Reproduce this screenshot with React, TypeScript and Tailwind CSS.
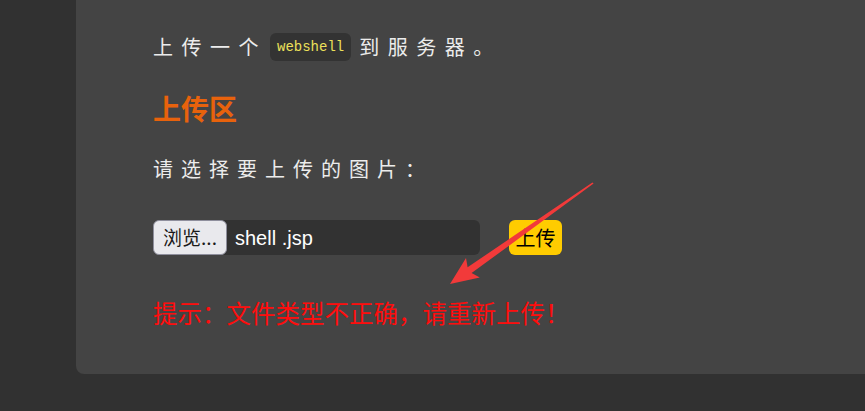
import React from "react";

const cjk = "font-['Noto_Sans_CJK_SC',sans-serif]";

const UploadCard: React.FC = () => {
  return (
    <div className="h-[374px] flex-1 rounded-bl-lg bg-[#444444] pl-[77px] pt-[31px]">
      <p className={`${cjk} flex h-8 items-center text-[20px] tracking-[8.5px] text-[#ececec]`}>
        上传一个
        <code className="ml-[3px] mr-2 rounded-md bg-[#333333] px-[7px] py-[4px] font-['Liberation_Mono',monospace] text-[14px] leading-5 tracking-normal text-[#ece05a]">
          webshell
        </code>
        到服务器。
      </p>

      <h2 className={`${cjk} mt-[27px] text-[28px] leading-9 font-bold text-[#e8620c]`}>上传区</h2>

      <p className={`${cjk} mt-[29px] text-[20px] leading-7 tracking-[8px] text-[#ececec]`}>请选择要上传的图片：</p>

      <div className="mt-9 flex h-[37px] items-center">
        <div className="flex h-[35px] w-[327px] items-center rounded-md bg-[#323232]">
          <button className={`${cjk} h-[35px] w-[74px] rounded-md border border-[#8f8f9d] bg-[#e9e9ed] text-[19px] text-[#1a1a1a]`}>
            浏览...
          </button>
          <span className="ml-2 font-['Liberation_Sans',sans-serif] text-[20px] text-white">shell .jsp</span>
        </div>
        <button className={`${cjk} ml-[29px] h-[35px] w-[53px] rounded-md bg-[#ffcc00] text-[20px] text-black`}>上传</button>
      </div>

      <p className={`${cjk} mt-[41px] text-[24.5px] leading-8 text-[#ff0d0d]`}>提示：文件类型不正确，请重新上传！</p>
    </div>
  );
};

const App: React.FC = () => {
  return (
    <div className="relative flex h-[411px] w-[865px] overflow-hidden bg-[#313131] pl-[76px]">
      <UploadCard />
      <svg className="pointer-events-none absolute inset-0" width="865" height="411" viewBox="0 0 865 411">
        <polygon
          points="450,284 479.8,277.6 471.6,273.1 593.6,183.6 592.4,182.4 467.6,267.3 466,258"
          fill="#f23a3a"
        />
      </svg>
    </div>
  );
};

export default App;
